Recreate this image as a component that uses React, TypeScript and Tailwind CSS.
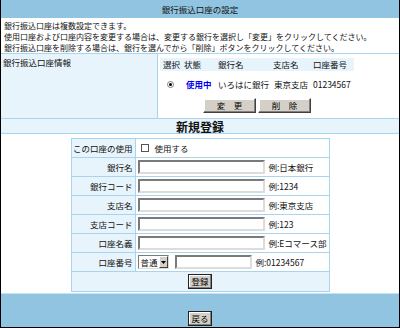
const font = "font-['Noto_Sans_CJK_JP','Noto_Sans',sans-serif]";

function Btn({ label, w, strong }: { label: string; w: string; strong?: boolean }) {
  return (
    <button
      className={
        "flex h-[15px] items-center justify-center bg-[#d4d0c8] text-[8.5px] leading-none text-black shadow-[inset_-1px_-1px_0_#808080,inset_1px_1px_0_#ffffff] " +
        w +
        (strong ? " border border-[#222]" : " border border-t-white border-l-white border-r-[#404040] border-b-[#404040]")
      }
    >
      {label}
    </button>
  );
}

function TextBox({ w }: { w: string }) {
  return (
    <div
      className={
        "h-[14px] border-2 border-t-[#7a7a7a] border-l-[#7a7a7a] border-r-[#dcdcdc] border-b-[#dcdcdc] bg-white " +
        w
      }
    />
  );
}

const rows: { label: string; hint: string }[] = [
  { label: "銀行名", hint: "例:日本銀行" },
  { label: "銀行コード", hint: "例:1234" },
  { label: "支店名", hint: "例:東京支店" },
  { label: "支店コード", hint: "例:123" },
  { label: "口座名義", hint: "例:Eコマース部" },
];

export default function App() {
  return (
    <div
      className={
        "flex h-[328px] w-[400px] flex-col border-x border-b border-black bg-white text-[8.5px] leading-[11px] text-[#111] " +
        font
      }
    >
      {/* タイトル */}
      <div className="flex h-[18px] items-center justify-center bg-[#90c4e0]">銀行振込口座の設定</div>

      {/* 説明 */}
      <div className="h-[35px] px-[3px] pt-[2px] text-[8px]">
        <p>銀行振込口座は複数設定できます。</p>
        <p>使用口座および口座内容を変更する場合は、変更する銀行を選択し「変更」をクリックしてください。</p>
        <p>銀行振込口座を削除する場合は、銀行を選んでから「削除」ボタンをクリックしてください。</p>
      </div>

      {/* 登録済み口座 */}
      <div className="flex h-[66px] border-y border-[#a9d4ee]">
        <div className="w-[156px] bg-[#e8f4fc] px-[2px] pt-[3px]">銀行振込口座情報</div>
        <div className="flex-1 border-l border-[#a9d4ee] pl-[2px] pt-[4px]">
          <div className="flex w-fit flex-col items-center">
            <table className="border-collapse">
              <thead>
                <tr className="h-[13px] bg-[#e8f4fc] text-left">
                  <th className="w-[21px] pl-[3px] font-normal">選択</th>
                  <th className="w-[34px] pl-[3px] font-normal">状態</th>
                  <th className="w-[55px] pl-[3px] font-normal">銀行名</th>
                  <th className="w-[40px] pl-[3px] font-normal">支店名</th>
                  <th className="w-[44px] pl-[3px] font-normal">口座番号</th>
                </tr>
              </thead>
              <tbody>
                <tr className="h-[27px]">
                  <td>
                    <div className="mx-auto flex h-[7px] w-[7px] items-center justify-center rounded-full border border-[#808080] bg-white">
                      <div className="h-[3px] w-[3px] rounded-full bg-black" />
                    </div>
                  </td>
                  <td className="pl-[5px] font-bold text-[#0000ee]">使用中</td>
                  <td className="pl-[3px]">いろはに銀行</td>
                  <td className="pl-[4px]">東京支店</td>
                  <td className="pl-[3px]">01234567</td>
                </tr>
              </tbody>
            </table>
            <div className="flex gap-[2px]">
              <Btn label="変　更" w="w-[53px]" />
              <Btn label="削　除" w="w-[53px]" />
            </div>
          </div>
        </div>
      </div>

      {/* 新規登録 */}
      <div className="flex h-[15px] items-center justify-center border-b border-[#a9d4ee] bg-[#e8f4fc] text-[12px] font-bold">
        新規登録
      </div>

      <div className="flex flex-1 justify-center pt-[4px]">
        <table className="h-fit w-[259px] border-collapse border border-[#a9d4ee]">
          <tbody>
            <tr className="h-[19px]">
              <td className="w-[64px] border border-[#a9d4ee] bg-[#e8f4fc] pr-[2px] text-right">この口座の使用</td>
              <td className="border border-[#a9d4ee]">
                <div className="flex items-center">
                  <div className="ml-[5px] h-[8px] w-[8px] border border-[#555] bg-white" />
                  <span className="ml-[6px]">使用する</span>
                </div>
              </td>
            </tr>
            {rows.map((r) => (
              <tr key={r.label} className="h-[19px]">
                <td className="border border-[#a9d4ee] bg-[#e8f4fc] pr-[2px] text-right">{r.label}</td>
                <td className="border border-[#a9d4ee] pl-[2px]">
                  <div className="flex items-center">
                    <TextBox w="w-[127px]" />
                    <span className="ml-[4px]">{r.hint}</span>
                  </div>
                </td>
              </tr>
            ))}
            <tr className="h-[19px]">
              <td className="border border-[#a9d4ee] bg-[#e8f4fc] pr-[2px] text-right">口座番号</td>
              <td className="border border-[#a9d4ee] pl-[2px]">
                <div className="flex items-center">
                  <div className="flex h-[14px] w-[31px] items-center border border-t-[#7a7a7a] border-l-[#7a7a7a] border-r-[#dcdcdc] border-b-[#dcdcdc] bg-white">
                    <span className="flex-1 pl-[2px] leading-none">普通</span>
                    <span className="flex h-[12px] w-[9px] items-center justify-center border border-t-white border-l-white border-r-[#404040] border-b-[#404040] bg-[#d4d0c8]">
                      <svg width="5" height="3" viewBox="0 0 5 3">
                        <path d="M0 0h5L2.5 3z" fill="#000" />
                      </svg>
                    </span>
                  </div>
                  <div className="ml-[6px]">
                    <TextBox w="w-[77px]" />
                  </div>
                  <span className="ml-[4px]">例:01234567</span>
                </div>
              </td>
            </tr>
            <tr className="h-[20px] bg-[#e8f4fc]">
              <td colSpan={2} className="border border-[#a9d4ee]">
                <div className="flex justify-center">
                  <Btn label="登録" w="w-[24px]" strong />
                </div>
              </td>
            </tr>
          </tbody>
        </table>
      </div>

      {/* 戻る */}
      <div className="flex h-[34px] items-end justify-center border-t border-[#c7e2f2] bg-[#90c4e0] pb-[1px]">
        <Btn label="戻る" w="w-[24px]" strong />
      </div>
    </div>
  );
}
